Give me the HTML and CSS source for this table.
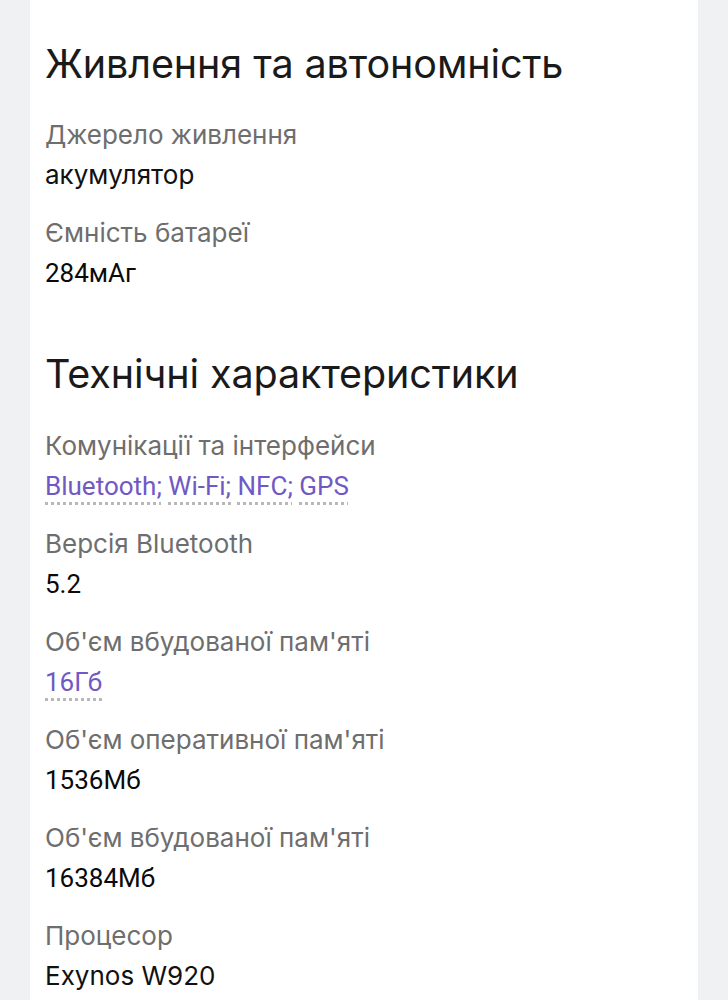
FILE: index.html
```html
<!DOCTYPE html>
<html lang="uk">
<head>
<meta charset="utf-8">
<link rel="stylesheet" href="styles.css">
</head>
<body>
<main class="card">
  <section class="section">
    <h2 class="title">Живлення та автономність</h2>
    <dl class="specs">
      <div class="spec"><dt>Джерело живлення</dt><dd>акумулятор</dd></div>
      <div class="spec"><dt>Ємність батареї</dt><dd class="narrow">284мАг</dd></div>
    </dl>
  </section>
  <section class="section">
    <h2 class="title">Технічні характеристики</h2>
    <dl class="specs">
      <div class="spec"><dt>Комунікації та інтерфейси</dt><dd class="narrow"><a class="link" href="#">Bluetooth;</a> <a class="link" href="#">Wi-Fi;</a> <a class="link" href="#">NFC;</a> <a class="link" href="#">GPS</a></dd></div>
      <div class="spec"><dt>Версія Bluetooth</dt><dd class="narrow">5.2</dd></div>
      <div class="spec"><dt>Об'єм вбудованої пам'яті</dt><dd class="narrow"><a class="link" href="#">16Гб</a></dd></div>
      <div class="spec"><dt>Об'єм оперативної пам'яті</dt><dd class="narrow">1536Мб</dd></div>
      <div class="spec"><dt>Об'єм вбудованої пам'яті</dt><dd class="narrow">16384Мб</dd></div>
      <div class="spec"><dt>Процесор</dt><dd>Exynos W920</dd></div>
    </dl>
  </section>
</main>
</body>
</html>
```
FILE: styles.css
```css
html, body {
  margin: 0;
  padding: 0;
  background: #f0f1f3;
}
body {
  font-family: Inter, "Noto Sans", sans-serif;
  color: #1a1a1a;
}
.card {
  margin: 0 30px;
  background: #ffffff;
  min-height: 1000px;
  padding: 40px 15px 0;
  box-sizing: border-box;
}
.section {
  margin-bottom: 58px;
}
.title {
  margin: 0 0 28px;
  font-size: 39.5px;
  font-weight: 400;
  line-height: 48px;
  letter-spacing: -0.1px;
  color: #1a1a1a;
}
.section + .section .title {
  margin-bottom: 29px;
}
.specs {
  margin: 0;
  display: flex;
  flex-direction: column;
  gap: 20px;
}
.spec dt {
  font-size: 26px;
  line-height: 38px;
  color: #6e6e6e;
}
.spec dd {
  margin: 2px 0 0;
  font-size: 26px;
  line-height: 38px;
  color: #111111;
}
.spec dd.narrow {
  font-family: Roboto, Inter, sans-serif;
  color: #0a0a0a;
}
.link {
  color: #7158c4;
  text-decoration: underline dotted #b8b8b8;
  text-decoration-thickness: 3px;
  text-underline-offset: 7px;
}
```
